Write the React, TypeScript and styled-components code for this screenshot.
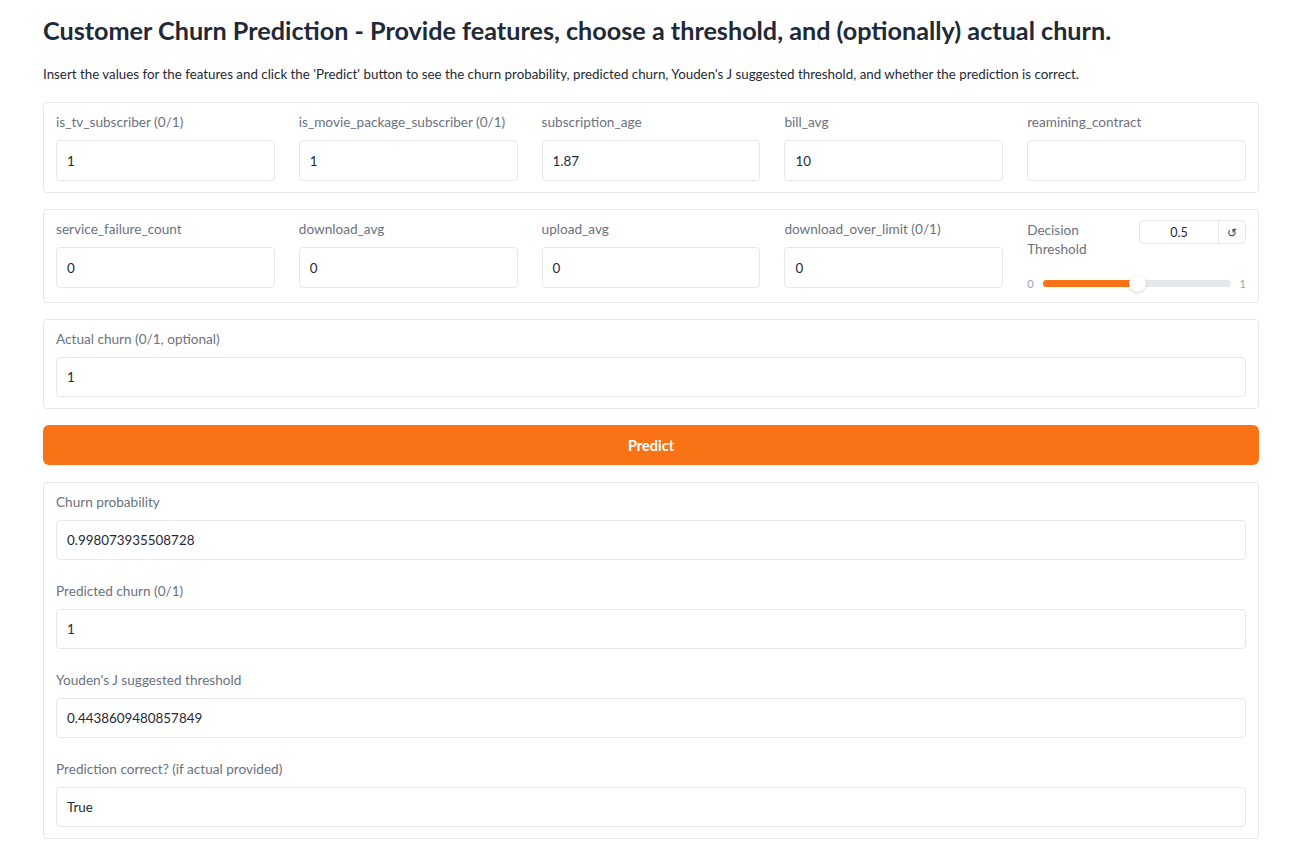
import React from "react";
import styled, { createGlobalStyle } from "styled-components";

const Global = createGlobalStyle`
  html, body { margin: 0; padding: 0; background: #fff; }
  body { font-family: Lato, "Noto Sans", sans-serif; color: #1f2937; }
  * { box-sizing: border-box; }
`;

const Page = styled.div`
  padding: 13px 41px 20px 43px;
  display: flex;
  flex-direction: column;
`;

const Title = styled.h1`
  margin: 0;
  font-size: 25.2px;
  font-weight: 700;
  line-height: 34px;
  color: #1f2937;
`;

const Intro = styled.p`
  margin: 18px 0 19px;
  font-size: 13.35px;
  line-height: 18px;
  color: #1f2937;
`;

const Stack = styled.div`
  display: flex;
  flex-direction: column;
  gap: 16px;
`;

const Panel = styled.div<{ $gapTop?: number }>`
  border: 1px solid #e5e7eb;
  border-radius: 4px;
  padding: 10px 12px 11px;
  margin-top: ${(p) => p.$gapTop ?? 0}px;
  background: #fff;
`;

const FieldList = styled.div`
  display: flex;
  flex-direction: column;
  gap: 22px;
`;

const Grid = styled.div`
  display: grid;
  grid-template-columns: repeat(5, 1fr);
  column-gap: 24px;
  align-items: start;
`;

const Field = styled.div`
  display: flex;
  flex-direction: column;
  gap: 9px;
`;

const Label = styled.span`
  font-size: 13.6px;
  line-height: 18px;
  color: #6b7280;
  white-space: nowrap;
`;

const Input = styled.div<{ $h?: number }>`
  height: ${(p) => p.$h ?? 41}px;
  border: 1px solid #e5e7eb;
  border-radius: 4px;
  padding: 0 10px;
  display: flex;
  align-items: center;
  font-size: 13.4px;
  color: #1f2937;
`;

const SliderBlock = styled.div`
  display: flex;
  flex-direction: column;
  padding-bottom: 1px;
`;

const SliderHead = styled.div`
  display: flex;
  justify-content: space-between;
  align-items: flex-start;
`;

const SliderLabel = styled.span`
  font-size: 13.6px;
  line-height: 19px;
  color: #6b7280;
  width: 70px;
  margin-top: 1px;
`;

const NumBox = styled.div`
  display: flex;
  width: 107px;
  height: 24px;
  border: 1px solid #e5e7eb;
  border-radius: 4px;
  font-size: 12.5px;
  color: #1f2937;
`;

const NumValue = styled.div`
  flex: 1;
  display: flex;
  align-items: center;
  justify-content: center;
  border-right: 1px solid #e5e7eb;
`;

const ResetBtn = styled.div`
  width: 26px;
  display: flex;
  align-items: center;
  justify-content: center;
  font-size: 12px;
  color: #374151;
`;

const SliderRow = styled.div`
  margin-top: 18px;
  display: flex;
  align-items: center;
  gap: 9px;
  font-size: 11px;
  color: #9ca3af;
`;

const Track = styled.div`
  position: relative;
  flex: 1;
  height: 7px;
  border-radius: 4px;
  background: #e5e7eb;
`;

const Fill = styled.div`
  position: absolute;
  left: 0;
  top: 0;
  bottom: 0;
  border-radius: 4px;
  background: #f97316;
`;

const Thumb = styled.div`
  position: absolute;
  top: 50%;
  width: 17px;
  height: 17px;
  margin-left: -8px;
  margin-top: -8.5px;
  border-radius: 50%;
  background: #fff;
  box-shadow: 0 1px 3px rgba(0, 0, 0, 0.18);
`;

const PredictButton = styled.button`
  height: 40px;
  border: none;
  border-radius: 6px;
  background: #f97316;
  color: #fff;
  font-family: inherit;
  font-size: 14.5px;
  font-weight: 700;
`;

const row1 = [
  ["is_tv_subscriber (0/1)", "1"],
  ["is_movie_package_subscriber (0/1)", "1"],
  ["subscription_age", "1.87"],
  ["bill_avg", "10"],
  ["reamining_contract", ""],
];

const row2 = [
  ["service_failure_count", "0"],
  ["download_avg", "0"],
  ["upload_avg", "0"],
  ["download_over_limit (0/1)", "0"],
];

const outputs = [
  ["Churn probability", "0.998073935508728"],
  ["Predicted churn (0/1)", "1"],
  ["Youden's J suggested threshold", "0.4438609480857849"],
  ["Prediction correct? (if actual provided)", "True"],
];

export default function App() {
  const pct = 50;
  return (
    <Page>
      <Global />
      <Title>Customer Churn Prediction - Provide features, choose a threshold, and (optionally) actual churn.</Title>
      <Intro>
        Insert the values for the features and click the 'Predict' button to see the churn probability, predicted churn, Youden's J suggested threshold, and whether the prediction is correct.
      </Intro>
      <Stack>
        <Panel>
          <Grid>
            {row1.map(([l, v]) => (
              <Field key={l}>
                <Label>{l}</Label>
                <Input>{v}</Input>
              </Field>
            ))}
          </Grid>
        </Panel>
        <Panel>
          <Grid>
            {row2.map(([l, v]) => (
              <Field key={l}>
                <Label>{l}</Label>
                <Input>{v}</Input>
              </Field>
            ))}
            <SliderBlock>
              <SliderHead>
                <SliderLabel>Decision Threshold</SliderLabel>
                <NumBox>
                  <NumValue>0.5</NumValue>
                  <ResetBtn>↺</ResetBtn>
                </NumBox>
              </SliderHead>
              <SliderRow>
                <span>0</span>
                <Track>
                  <Fill style={{ width: `${pct}%` }} />
                  <Thumb style={{ left: `${pct}%` }} />
                </Track>
                <span>1</span>
              </SliderRow>
            </SliderBlock>
          </Grid>
        </Panel>
        <Panel>
          <Field>
            <Label>Actual churn (0/1, optional)</Label>
            <Input $h={40}>1</Input>
          </Field>
        </Panel>
        <PredictButton>Predict</PredictButton>
        <Panel $gapTop={1}>
          <FieldList>
            {outputs.map(([l, v]) => (
              <Field key={l}>
                <Label>{l}</Label>
                <Input $h={40}>{v}</Input>
              </Field>
            ))}
          </FieldList>
        </Panel>
      </Stack>
    </Page>
  );
}
